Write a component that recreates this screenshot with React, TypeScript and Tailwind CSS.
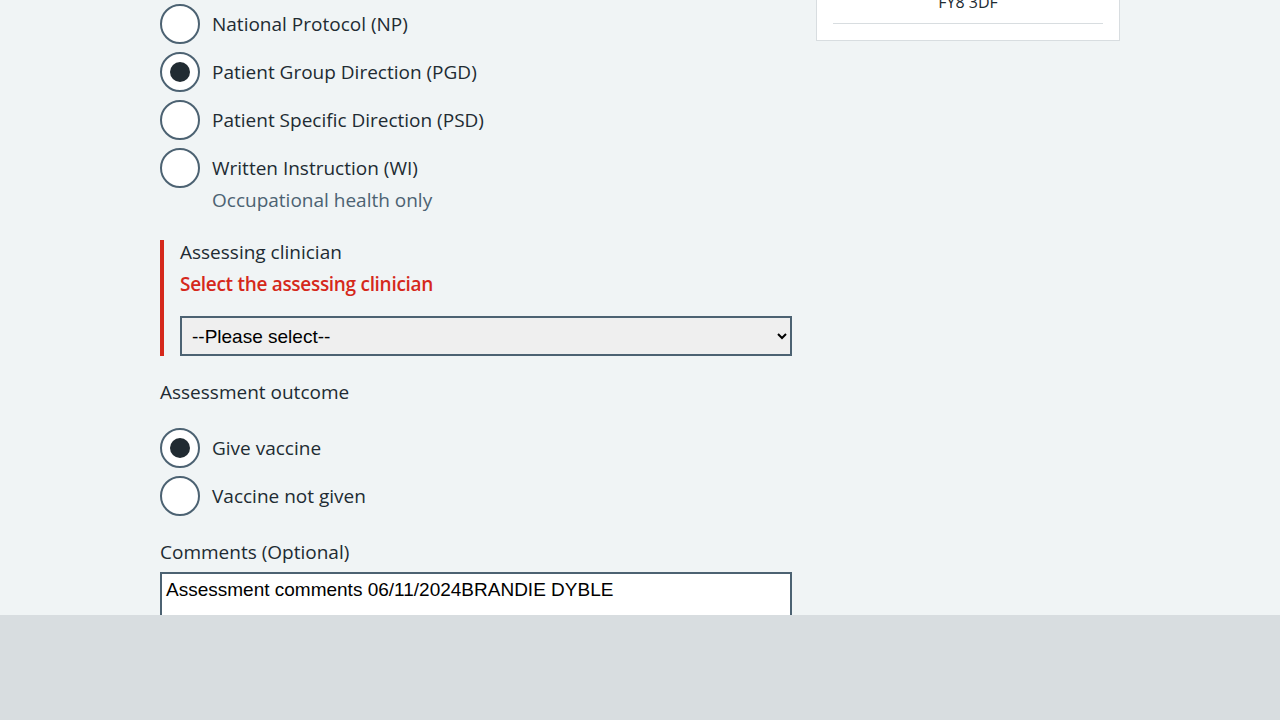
import { useState } from "react";

const font = { fontFamily: '"Open Sans", "Noto Sans", sans-serif' };

function Radio({
  label,
  hint,
  checked,
  onChange,
}: {
  label: string;
  hint?: string;
  checked: boolean;
  onChange: () => void;
}) {
  return (
    <label className="flex items-start gap-3 mb-2 cursor-pointer">
      <span className="w-10 h-10 shrink-0 rounded-full border-2 border-[#4c6272] bg-white flex items-center justify-center">
        {checked && <span className="w-5 h-5 rounded-full bg-[#212b32]" />}
      </span>
      <span className="pt-[4px]">
        <span className="block text-[19px] leading-[32px] text-[#212b32]">{label}</span>
        {hint && <span className="block text-[19px] leading-[32px] text-[#4c6272]">{hint}</span>}
      </span>
      <input type="radio" className="hidden" checked={checked} onChange={onChange} />
    </label>
  );
}

export default function App() {
  const [route, setRoute] = useState("PGD");
  const [outcome, setOutcome] = useState("give");

  return (
    <div className="min-h-[720px] bg-[#f0f4f5] text-[#212b32]" style={font}>
      <div className="w-[960px] mx-auto flex gap-6 items-start">
        {/* main column */}
        <div className="w-[632px] pt-[4px]">
          <Radio label="National Protocol (NP)" checked={route === "NP"} onChange={() => setRoute("NP")} />
          <Radio label="Patient Group Direction (PGD)" checked={route === "PGD"} onChange={() => setRoute("PGD")} />
          <Radio label="Patient Specific Direction (PSD)" checked={route === "PSD"} onChange={() => setRoute("PSD")} />
          <Radio
            label="Written Instruction (WI)"
            hint="Occupational health only"
            checked={route === "WI"}
            onChange={() => setRoute("WI")}
          />

          <div className="mt-[24px] border-l-4 border-[#d5281b] pl-4">
            <div className="text-[19px] leading-[24px]">Assessing clinician</div>
            <div className="text-[19px] leading-[24px] mt-[8px] font-semibold tracking-[-0.3px] text-[#d5281b]">
              Select the assessing clinician
            </div>
            <select
              className="mt-[20px] w-full h-10 border-2 border-[#4c6272] bg-[#efefef] text-[19px] text-black px-[6px]"
              style={{ fontFamily: '"Liberation Sans", Arial, sans-serif' }}
            >
              <option>--Please select--</option>
            </select>
          </div>

          <div className="mt-[24px] text-[19px] leading-[24px]">Assessment outcome</div>
          <div className="mt-[24px]">
            <Radio label="Give vaccine" checked={outcome === "give"} onChange={() => setOutcome("give")} />
            <Radio label="Vaccine not given" checked={outcome === "not"} onChange={() => setOutcome("not")} />
          </div>

          <div className="mt-[24px] text-[19px] leading-[24px]">Comments (Optional)</div>
          <textarea
            className="mt-[8px] w-full h-[120px] border-2 border-[#4c6272] bg-white text-[19px] leading-[24px] text-black px-[4px] py-[4px] resize-none"
            style={{ fontFamily: '"Liberation Sans", Arial, sans-serif' }}
            defaultValue="Assessment comments 06/11/2024BRANDIE DYBLE"
          />
        </div>

        {/* side panel */}
        <div className="w-[304px] -mt-[11px] bg-white border border-[#d8dde0] px-4 pb-4">
          <div className="text-center text-[16px] leading-[24px]">FY8 3DF</div>
          <hr className="mt-[9px] border-t border-[#d8dde0]" />
        </div>
      </div>

      <div className="fixed left-0 right-0 bottom-0 h-[105px] bg-[#d8dde0]" />
    </div>
  );
}
